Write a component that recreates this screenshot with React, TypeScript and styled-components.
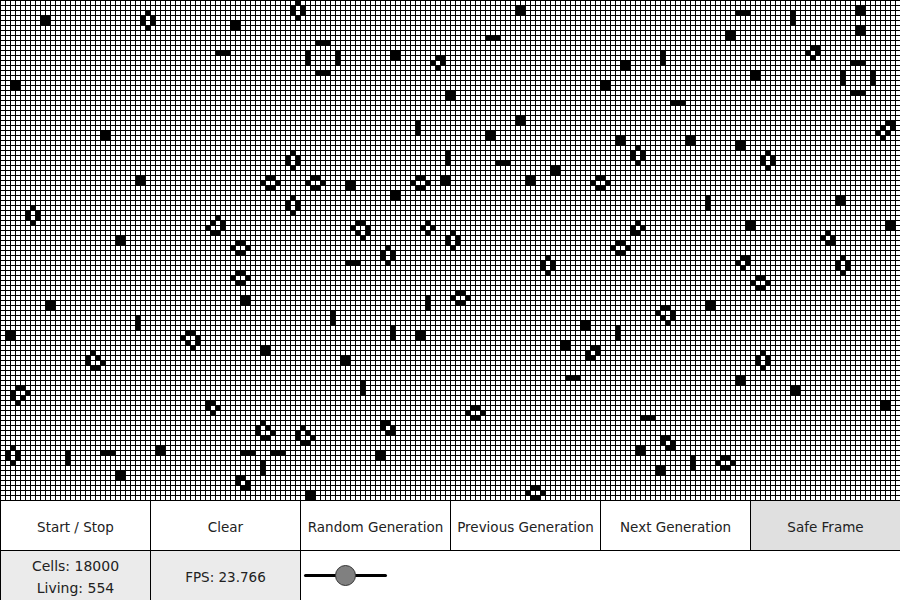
import React, { useState } from 'react';
import styled, { createGlobalStyle } from 'styled-components';

const CELL = 5;

const GlobalStyle = createGlobalStyle`
  html, body {
    margin: 0;
    padding: 0;
    background: #fff;
    overflow: hidden;
  }
  * {
    box-sizing: border-box;
  }
`;

const Page = styled.div`
  display: flex;
  flex-direction: column;
  width: 900px;
  height: 600px;
  font-family: 'DejaVu Sans', sans-serif;
  font-size: 14px;
  color: #222;
`;

const Board = styled.svg`
  display: block;
  width: 900px;
  height: 500px;
  flex: none;
`;

const Controls = styled.div`
  display: grid;
  grid-template-columns: repeat(6, 150px);
  grid-template-rows: repeat(2, 50px);
`;

const Button = styled.button<{ $active?: boolean }>`
  display: flex;
  align-items: center;
  justify-content: center;
  margin: 0;
  padding: 2px 0 0;
  border: 0;
  border-top: 1px solid #000;
  border-left: 1px solid #000;
  border-radius: 0;
  background: ${({ $active }) => ($active ? '#e0e0e0' : '#fff')};
  color: inherit;
  font: inherit;
  font-size: 13.5px;
  white-space: nowrap;
  cursor: pointer;
`;

const Stat = styled.div<{ $size?: number }>`
  display: flex;
  flex-direction: column;
  align-items: center;
  justify-content: center;
  padding-top: 2px;
  border-top: 1px solid #000;
  border-left: 1px solid #000;
  background: #ebebeb;
  font-size: ${({ $size }) => $size || 14}px;
  line-height: 22px;
`;

const SliderCell = styled.div`
  grid-column: span 4;
  display: flex;
  align-items: center;
  padding-left: 3px;
  border-top: 1px solid #000;
  border-left: 1px solid #000;
`;

const Speed = styled.input`
  appearance: none;
  width: 83px;
  height: 21px;
  margin: 0;
  padding: 0;
  background: transparent;

  &::-webkit-slider-runnable-track {
    height: 3px;
    border-radius: 2px;
    background: #000;
  }

  &::-webkit-slider-thumb {
    appearance: none;
    width: 21px;
    height: 21px;
    margin-top: -9px;
    border: 1px solid #333;
    border-radius: 50%;
    background: #808080;
  }
`;

const B = ['XX', 'XX'];
const H = ['XXX'];
const V = ['X', 'X', 'X'];
const HIVE_V = ['.X.', 'X.X', 'X.X', '.X.'];
const HIVE_H = ['.XX.', 'X..X', '.XX.'];
const TUB = ['.X.', 'X.X', '.X.'];
const BOAT_A = ['.XX', 'X.X', '.X.'];
const BOAT_C = ['.X.', 'X.X', 'XX.'];
const BOAT_D = ['.X.', 'X.X', '.XX'];
const BOAT_E = ['XX.', 'X.X', '.X.'];
const SHIP_A = ['XX.', 'X.X', '.XX'];
const SHIP_B = ['.XX', 'X.X', 'XX.'];
const LOAF_A = ['..X.', '.X.X', 'X..X', '.XX.'];
const LOAF_B = ['.XX.', 'X..X', '.X.X', '..X.'];
const LOAF_C = ['.X..', 'X.X.', 'X..X', '.XX.'];
const LOAF_D = ['.XX.', 'X..X', 'X.X.', '.X..'];
const LONG_BOAT = ['..XX', '.X.X', 'X.X.', '.X..'];

type Placed = [string[], number, number];

// the still lifes and blinkers on the board, as [shape, column, row]
const patterns: Placed[] = [
  [B, 8, 3], [HIVE_V, 28, 2], [B, 46, 4], [HIVE_V, 58, 0], [H, 43, 10], [B, 2, 16],
  [B, 20, 26], [HIVE_V, 57, 30], [B, 27, 35], [HIVE_H, 52, 35], [HIVE_V, 57, 39],
  [HIVE_V, 5, 41], [LOAF_A, 41, 43], [B, 23, 47], [HIVE_H, 46, 48],
  [B, 103, 1], [H, 63, 8], [H, 97, 7], [V, 61, 10], [V, 67, 10], [H, 63, 14],
  [B, 78, 10], [BOAT_A, 86, 11], [B, 89, 18], [B, 103, 23], [V, 83, 24], [B, 97, 26],
  [V, 89, 30], [H, 99, 32], [B, 110, 33], [HIVE_H, 61, 35], [B, 69, 36], [HIVE_H, 82, 35],
  [B, 88, 35], [B, 105, 35], [HIVE_H, 118, 35], [B, 78, 38], [LOAF_B, 70, 44], [TUB, 84, 44],
  [HIVE_V, 89, 46], [HIVE_V, 76, 49],
  [H, 147, 2], [V, 158, 2], [B, 171, 1], [B, 171, 5], [B, 145, 6], [BOAT_A, 161, 9],
  [V, 132, 10], [B, 124, 12], [H, 170, 12], [V, 168, 14], [V, 174, 14], [H, 170, 18],
  [B, 150, 14], [B, 120, 16], [H, 134, 20], [LONG_BOAT, 175, 24], [B, 123, 27], [B, 137, 27],
  [B, 147, 28], [HIVE_V, 126, 29], [HIVE_V, 152, 30], [V, 141, 39], [B, 167, 39],
  [BOAT_C, 126, 44], [B, 149, 44], [B, 177, 44], [BOAT_D, 164, 46], [HIVE_H, 122, 48],
  [HIVE_H, 46, 54], [B, 9, 60], [B, 48, 59], [V, 27, 63], [B, 1, 66], [LOAF_B, 36, 66],
  [B, 52, 69], [LOAF_C, 17, 70], [LOAF_D, 2, 77], [BOAT_E, 41, 80], [LOAF_C, 51, 84],
  [LOAF_C, 59, 85], [HIVE_V, 1, 89], [V, 13, 90], [H, 20, 90], [B, 31, 89], [H, 48, 90],
  [H, 54, 90], [V, 52, 92], [B, 23, 94], [SHIP_A, 47, 95],
  [H, 69, 52], [HIVE_V, 108, 51], [HIVE_H, 90, 58], [V, 85, 59], [V, 66, 62], [V, 78, 65],
  [B, 83, 66], [B, 116, 64], [B, 112, 68], [SHIP_B, 117, 69], [B, 68, 71], [H, 113, 75],
  [V, 72, 76], [HIVE_H, 93, 81], [SHIP_A, 76, 84], [B, 75, 90], [B, 61, 98], [HIVE_H, 105, 97],
  [BOAT_A, 147, 51], [HIVE_V, 167, 51], [HIVE_H, 150, 55], [B, 141, 60], [LOAF_B, 131, 61],
  [V, 123, 65], [HIVE_V, 151, 70], [B, 147, 75], [B, 158, 77], [B, 176, 80], [H, 128, 83],
  [SHIP_A, 132, 87], [B, 127, 89], [B, 131, 93], [V, 138, 91], [HIVE_H, 143, 91],
];

const livingPath = patterns
  .flatMap(([shape, col, row]) =>
    shape.flatMap((line, dy) =>
      line.split('').map((c, dx) => {
        if (c !== 'X') return '';
        return `M${(col + dx) * CELL} ${(row + dy) * CELL}h${CELL + 1}v${CELL + 1}h-${CELL + 1}z`;
      })
    )
  )
  .join('');

const buttons = ['Start / Stop', 'Clear', 'Random Generation', 'Previous Generation', 'Next Generation', 'Safe Frame'];

const App = () => {
  const [speed, setSpeed] = useState(50);

  return (
    <Page>
      <GlobalStyle />
      <Board viewBox="0 0 900 500" shapeRendering="crispEdges">
        <defs>
          <pattern id="grid" width={CELL} height={CELL} patternUnits="userSpaceOnUse">
            <path d="M0 0h5v1h-4v4h-1z" fill="#000" />
          </pattern>
        </defs>
        <rect width="900" height="500" fill="#fff" />
        <rect width="900" height="500" fill="url(#grid)" />
        <path d={livingPath} fill="#000" />
      </Board>
      <Controls>
        {buttons.map((label) => (
          <Button key={label} $active={label === 'Safe Frame'}>
            {label}
          </Button>
        ))}
        <Stat>
          <span>Cells: 18000</span>
          <span>Living: 554</span>
        </Stat>
        <Stat $size={13.5}>
          <span>FPS: 23.766</span>
        </Stat>
        <SliderCell>
          <Speed type="range" min={0} max={100} value={speed} onChange={(e) => setSpeed(Number(e.target.value))} />
        </SliderCell>
      </Controls>
    </Page>
  );
};

export default App;
